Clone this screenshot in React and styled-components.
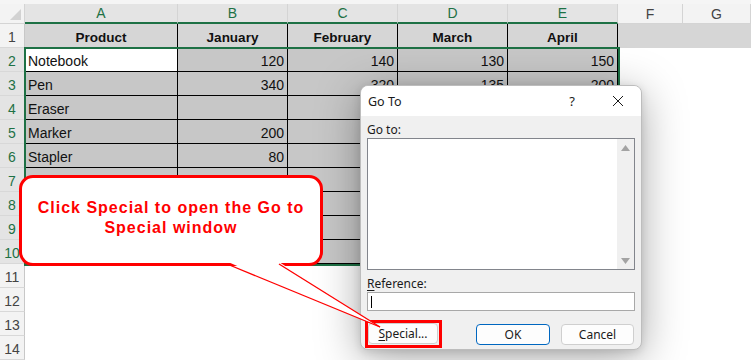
import React from "react";
import styled, { createGlobalStyle } from "styled-components";

const GlobalStyle = createGlobalStyle`
  html, body {
    margin: 0;
    padding: 0;
    background: #ffffff;
    overflow: hidden;
  }
  * { box-sizing: border-box; }
`;

const columns = [
  { key: "A", w: 153, sel: true },
  { key: "B", w: 110, sel: true },
  { key: "C", w: 110, sel: true },
  { key: "D", w: 110, sel: true },
  { key: "E", w: 110, sel: true },
  { key: "F", w: 65, sel: false },
  { key: "G", w: 68, sel: false },
];

// cells hidden behind the dialog are left empty
const data = [
  ["Product", "January", "February", "March", "April"],
  ["Notebook", 120, 140, 130, 150],
  ["Pen", 340, 320, 135, 200],
  ["Eraser", "", "", "", ""],
  ["Marker", 200, "", "", ""],
  ["Stapler", 80, "", "", ""],
  ["", "", "", "", ""],
  ["", "", "", "", ""],
  ["", "", "", "", ""],
  ["", "", "", "", ""],
];

const GREEN = "#1e7145";

const Page = styled.div`
  position: relative;
  width: 751px;
  height: 360px;
  overflow: hidden;
  background: #ffffff;
  font-family: "Liberation Sans", Arial, sans-serif;
`;

const TopStrip = styled.div`
  height: 4px;
  background: #f5f5f5;
`;

const Sheet = styled.div`
  display: grid;
  grid-template-columns: 25px ${columns.map((c) => c.w + "px").join(" ")};
  grid-template-rows: 20px repeat(14, 24px);
`;

const Corner = styled.div`
  background: #f3f3f3;
  border-right: 1px solid #d4d4d4;
  border-bottom: 1px solid #d4d4d4;
  display: flex;
  align-items: flex-end;
  justify-content: flex-end;
  padding: 0 3px 3px 0;
`;

const ColHead = styled.div`
  display: flex;
  align-items: center;
  justify-content: center;
  font-size: 14px;
  color: ${(p) => (p.$sel ? "#1e7145" : "#444444")};
  background: ${(p) => (p.$sel ? "#e4e4e4" : "#f3f3f3")};
  border-right: 1px solid #d4d4d4;
  border-bottom: ${(p) => (p.$sel ? `2px solid ${GREEN}` : "1px solid #d4d4d4")};
`;

const RowHead = styled.div`
  display: flex;
  align-items: center;
  justify-content: center;
  font-size: 14px;
  color: ${(p) => (p.$sel ? "#1e7145" : "#444444")};
  background: ${(p) => (p.$sel ? "#e4e4e4" : "#f3f3f3")};
  border-right: 1px solid ${(p) => (p.$sel ? GREEN : "#c8c8c8")};
  border-bottom: 1px solid #d8d8d8;
  padding-top: 2px;
`;

const fills = {
  head: "#d6d6d6",
  band: "#d6d6d6",
  active: "#ffffff",
  sel: "#c7c7c7",
  plain: "#ffffff",
};

const Cell = styled.div`
  display: flex;
  align-items: flex-end;
  justify-content: ${(p) => (p.$head ? "center" : p.$num ? "flex-end" : "flex-start")};
  padding: 0 3px 2px 3px;
  font-size: ${(p) => (p.$head ? "13.5px" : "14px")};
  font-weight: ${(p) => (p.$head ? 700 : 400)};
  color: #111111;
  background: ${(p) => fills[p.$kind]};
  border-right: 1px solid ${(p) => (p.$boxed ? "#000000" : "transparent")};
  border-bottom: 1px solid ${(p) => (p.$boxed ? "#000000" : "transparent")};
  white-space: nowrap;
  overflow: hidden;
`;

const Selection = styled.div`
  position: absolute;
  left: 24px;
  top: 47px;
  width: 596px;
  height: 219px;
  border: 2px solid ${GREEN};
  pointer-events: none;
`;

/* ---------- Go To dialog ---------- */

const Dialog = styled.div`
  position: absolute;
  left: 360px;
  top: 85px;
  width: 282px;
  height: 265px;
  background: #f0f0f0;
  border: 1px solid #bdbdbd;
  border-radius: 8px;
  overflow: hidden;
  box-shadow: 0 8px 44px rgba(0, 0, 0, 0.34), 0 2px 8px rgba(0, 0, 0, 0.12);
  font-family: "Noto Sans", "Open Sans", sans-serif;
  color: #1a1a1a;
  display: flex;
  flex-direction: column;
`;

const TitleBar = styled.div`
  height: 30px;
  background: #ffffff;
  display: flex;
  align-items: center;
  padding-left: 7px;
  font-size: 12.5px;
`;

const Title = styled.span`
  flex: 1;
`;

const TitleButton = styled.span`
  width: 46px;
  height: 30px;
  display: flex;
  align-items: center;
  justify-content: center;
  font-size: 13px;
`;

const Body = styled.div`
  flex: 1;
  padding: 5px 6px 0 6px;
  display: flex;
  flex-direction: column;
`;

const Label = styled.div`
  height: 17px;
  font-size: 12px;
  line-height: 17px;
  margin-top: ${(p) => p.$gap || 0}px;
  u { text-decoration-thickness: 1px; text-underline-offset: 2px; }
`;

const ListBox = styled.div`
  height: 132px;
  border: 1px solid #82858c;
  background: #ffffff;
  display: flex;
  justify-content: flex-end;
`;

const ScrollTrack = styled.div`
  width: 17px;
  background: #f0f0f0;
  display: flex;
  flex-direction: column;
  justify-content: space-between;
  align-items: center;
  padding: 6px 0 5px;
`;

const RefInput = styled.div`
  height: 19px;
  border: 1px solid #a8a8a8;
  background: #ffffff;
  display: flex;
  align-items: center;
  padding-left: 3px;
`;

const Caret = styled.span`
  width: 1px;
  height: 12px;
  background: #000000;
`;

const ButtonRow = styled.div`
  display: flex;
  align-items: center;
  margin-top: 9px;
  padding-right: 1px;
`;

const Marked = styled.div`
  display: flex;
  border: 3px solid #ff0000;
  padding: 0 1px 1px 0;
  margin-left: -2px;
`;

const Button = styled.div`
  width: ${(p) => p.$w}px;
  height: 21px;
  margin-left: ${(p) => p.$ml || 0}px;
  display: flex;
  align-items: center;
  justify-content: center;
  font-size: 12px;
  background: #fdfdfd;
  border: 1px solid ${(p) => (p.$primary ? "#0067c0" : "#cfcfcf")};
  border-radius: 4px;
  u { text-decoration-thickness: 1px; text-underline-offset: 2px; }
`;

const Spacer = styled.div`
  flex: 1;
`;

/* ---------- Callout ---------- */

const Callout = styled.div`
  position: absolute;
  left: 19px;
  top: 175px;
  width: 304px;
  height: 91px;
  background: #ffffff;
  border: 3px solid #ff0000;
  border-radius: 14px;
  display: flex;
  align-items: center;
  justify-content: center;
  padding: 0 10px 6px;
  text-align: center;
  color: #ff0000;
  font-weight: 700;
  font-size: 16px;
  letter-spacing: 1px;
  line-height: 20px;
  font-family: "Liberation Sans", Arial, sans-serif;
`;

const Pointer = styled.svg`
  position: absolute;
  left: 0;
  top: 0;
  width: 751px;
  height: 360px;
  pointer-events: none;
`;

function CornerMark() {
  return (
    <svg width="11" height="11" viewBox="0 0 11 11">
      <polygon points="11,0 11,11 0,11" fill="#d2d2d2" />
    </svg>
  );
}

function Arrow({ down }) {
  return (
    <svg width="9" height="6" viewBox="0 0 9 6">
      <polygon points={down ? "0,0 9,0 4.5,6" : "0,6 9,6 4.5,0"} fill="#a3a3a3" />
    </svg>
  );
}

function CloseIcon() {
  return (
    <svg width="12" height="12" viewBox="0 0 12 12">
      <path d="M1 1 L11 11 M11 1 L1 11" stroke="#1a1a1a" strokeWidth="1" fill="none" />
    </svg>
  );
}

export default function App() {
  const cells = [];
  cells.push(
    <Corner key="corner">
      <CornerMark />
    </Corner>
  );
  columns.forEach((c) => cells.push(<ColHead key={"h" + c.key} $sel={c.sel}>{c.key}</ColHead>));

  for (let r = 1; r <= 14; r++) {
    const inSel = r >= 2 && r <= 10;
    cells.push(<RowHead key={"r" + r} $sel={inSel}>{r}</RowHead>);
    columns.forEach((c, ci) => {
      const boxed = r <= 10 && ci < 5;
      let kind = "plain";
      if (r === 1) kind = ci < 5 ? "head" : "band";
      else if (boxed) kind = r === 2 && ci === 0 ? "active" : "sel";
      const value = boxed ? data[r - 1][ci] : "";
      cells.push(
        <Cell
          key={c.key + r}
          $kind={kind}
          $boxed={boxed}
          $head={r === 1}
          $num={typeof value === "number"}
        >
          {value}
        </Cell>
      );
    });
  }

  return (
    <Page>
      <GlobalStyle />
      <TopStrip />
      <Sheet>{cells}</Sheet>
      <Selection />

      <Dialog>
        <TitleBar>
          <Title>Go To</Title>
          <TitleButton>?</TitleButton>
          <TitleButton>
            <CloseIcon />
          </TitleButton>
        </TitleBar>
        <Body>
          <Label>Go to:</Label>
          <ListBox>
            <ScrollTrack>
              <Arrow />
              <Arrow down />
            </ScrollTrack>
          </ListBox>
          <Label $gap={5}>
            <u>R</u>eference:
          </Label>
          <RefInput>
            <Caret />
          </RefInput>
          <ButtonRow>
            <Marked>
              <Button $w={70}>
                <u>S</u>pecial...
              </Button>
            </Marked>
            <Spacer />
            <Button $w={74} $primary>
              OK
            </Button>
            <Button $w={73} $ml={11}>
              Cancel
            </Button>
          </ButtonRow>
        </Body>
      </Dialog>

      <Callout>
        Click Special to open the Go to Special window
      </Callout>
      <Pointer viewBox="0 0 751 360">
        <polygon points="228,262 380,327 279,262" fill="#ffffff" />
        <line x1="227" y1="264" x2="380" y2="327" stroke="#ff0000" strokeWidth="1.3" />
        <line x1="279" y1="264" x2="380" y2="327" stroke="#ff0000" strokeWidth="1.3" />
      </Pointer>
    </Page>
  );
}
